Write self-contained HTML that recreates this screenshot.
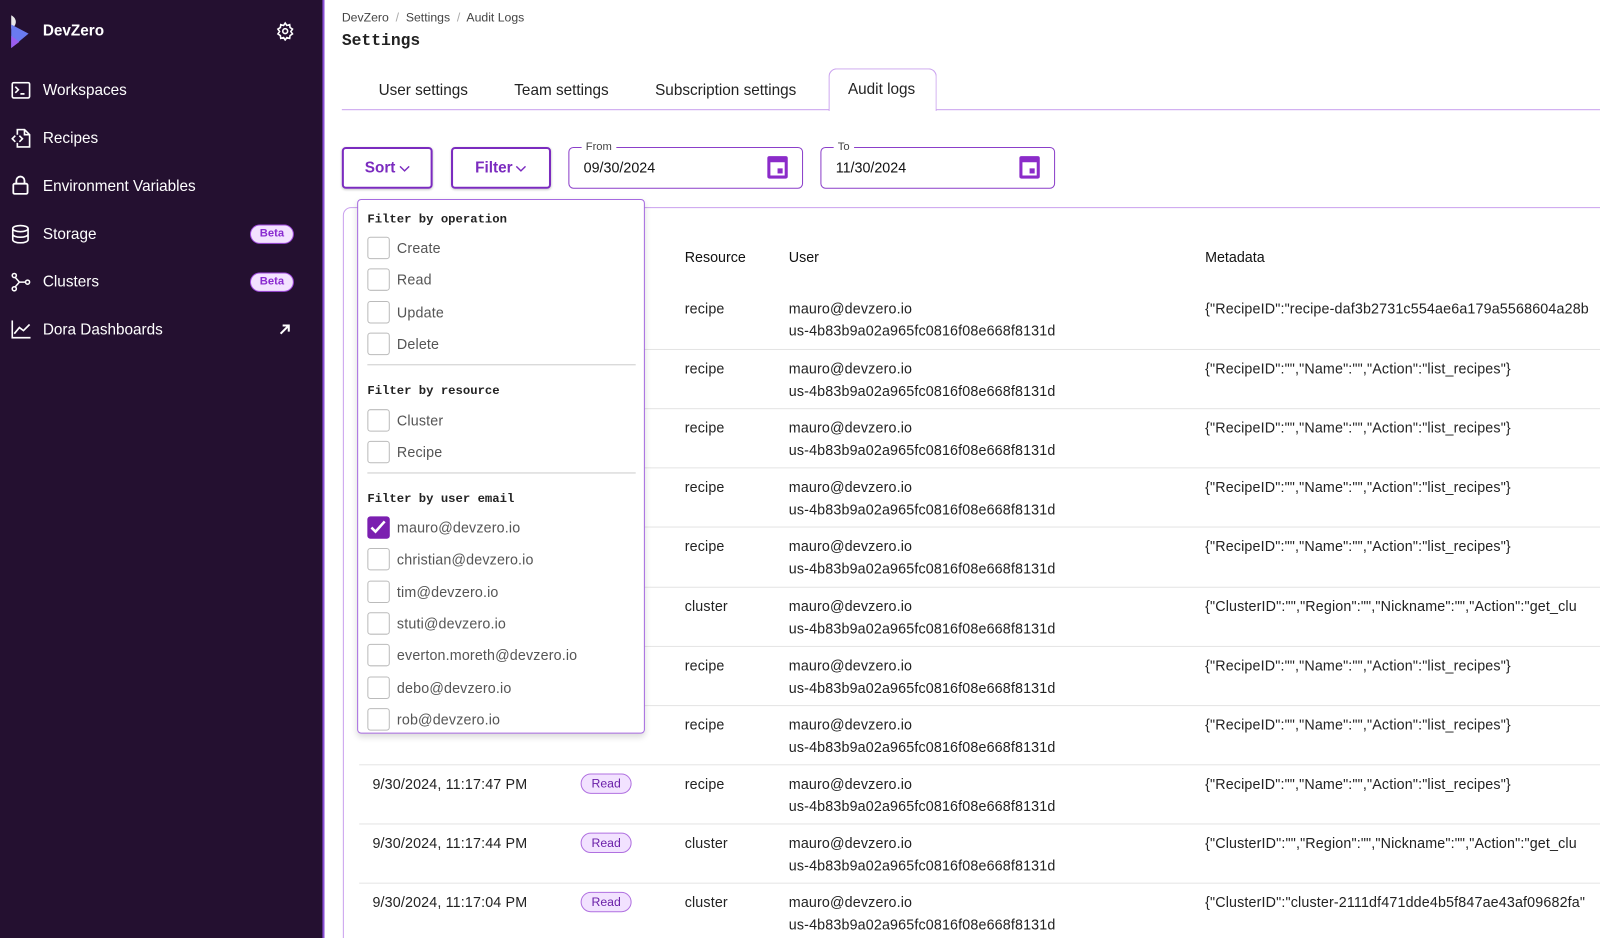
<!DOCTYPE html>
<html><head><meta charset="utf-8"><style>
*{box-sizing:border-box;margin:0;padding:0}
html,body{width:1600px;height:938px;overflow:hidden;background:#fff}
body{font-family:"Liberation Sans",sans-serif;color:#111;position:relative}
#w{position:absolute;left:0;top:0;width:1568px;height:920px;transform:scale(1.0204);transform-origin:0 0}
.sb{position:absolute;left:0;top:0;width:318px;height:920px;background:#241030;border-right:2px solid #8a4fd6}
.sb .it{position:absolute;left:42px;color:#fff;font-size:15px}
.sb svg{position:absolute}
.beta{position:absolute;left:245px;width:43px;height:19px;border-radius:10px;background:#f3e2ff;border:1px solid #a24be0;color:#8a2bd0;font-size:11px;font-weight:bold;text-align:center;line-height:17px}
.abs{position:absolute}
.tab{position:absolute;top:80px;font-size:15px;color:#222}
.btn{position:absolute;top:144px;height:41px;border:2px solid #7b2bbf;border-radius:4px;color:#7b2bbf;font-weight:bold;font-size:15px;line-height:37px;text-align:center;box-shadow:0 1px 2px rgba(0,0,0,.2)}
.btn svg{vertical-align:middle;margin-left:3px}
.date{position:absolute;top:144px;height:41px;border:1.5px solid #8b3fc9;border-radius:5px;font-size:14px;line-height:38px;padding-left:14px}
.date .lb{position:absolute;top:-8px;left:12px;background:#fff;padding:0 4px;font-size:11px;color:#444;line-height:14px}
.cal{position:absolute;right:14px;top:8px;width:20px;height:22px;border:3px solid #8b2bc9;border-top-width:6px;border-radius:2px}
.cal:after{content:"";position:absolute;right:2px;bottom:2px;width:5px;height:5px;background:#8b2bc9}
.row{position:absolute;left:352px;width:1248px;height:58px;border-top:1px solid #e4e4e4;font-size:14px;color:#222;letter-spacing:.15px}
.row span{position:absolute;white-space:nowrap}
.rd{position:absolute;left:217px;top:8px;width:50px;height:20px;border:1px solid #b070e0;background:#f2e2ff;border-radius:10px;font-size:12px;color:#6a1fa8;text-align:center;line-height:18px;letter-spacing:0}
.dd{position:absolute;left:350px;top:195px;width:282px;height:524px;background:#fff;border:1.5px solid #a66ae0;border-radius:4px;box-shadow:0 3px 6px rgba(0,0,0,.15)}
.dd h4{position:absolute;left:9px;font-family:"Liberation Mono",monospace;font-size:12px;font-weight:bold;color:#222}
.ck{position:absolute;left:9px;width:22px;height:22px;border:1.5px solid #bbb;border-radius:3px}
.cl{position:absolute;left:38px;font-size:14px;color:#555;letter-spacing:.15px}
.hr{position:absolute;left:9px;width:263px;border-top:1px solid #ccc}
</style></head><body><div id="w">
<div class="sb">
<svg style="left:8px;top:15px" width="22" height="32" viewBox="0 0 22 32"><path d="M3 0 C9 3 9 10 3 13 Z" fill="#e8e8e8"/><path d="M3 9 L20 18 L3 32 Z" fill="#6a7bf0"/><path d="M3 20 L11 26 L3 32Z" fill="#9b5ef0"/></svg>
<div class="it" style="top:22px;font-weight:bold">DevZero</div>
<svg style="left:270px;top:21px" width="19" height="19" viewBox="0 0 24 24" fill="none" stroke="#fff" stroke-width="2"><circle cx="12" cy="12" r="3"/><path d="M12 2l2 3 3.5-1 .5 3.5 3 2-2 3 2 3-3 2-.5 3.5-3.5-1-2 3-2-3-3.5 1-.5-3.5-3-2 2-3-2-3 3-2 .5-3.5 3.5 1z"/></svg>
<svg style="left:11px;top:80px" width="19" height="17" viewBox="0 0 19 17" fill="none" stroke="#fff" stroke-width="1.6"><rect x="1" y="1" width="17" height="15" rx="1.5"/><path d="M4 5l3 3-3 3M9 12h4"/></svg>
<div class="it" style="top:80px">Workspaces</div>
<svg style="left:11px;top:126px" width="19" height="19" viewBox="0 0 19 19" fill="none" stroke="#fff" stroke-width="1.6"><path d="M6 6V1h7l5 5v12H6v-4M13 1v5h5"/><path d="M4 7L1 10l3 3M8 7l3 3-3 3"/></svg>
<div class="it" style="top:127px">Recipes</div>
<svg style="left:12px;top:172px" width="16" height="19" viewBox="0 0 16 19" fill="none" stroke="#fff" stroke-width="1.8"><rect x="1" y="8" width="14" height="10" rx="1.5"/><path d="M4 8V5a4 4 0 0 1 8 0v3"/></svg>
<div class="it" style="top:174px">Environment Variables</div>
<svg style="left:11px;top:220px" width="18" height="19" viewBox="0 0 18 19" fill="none" stroke="#fff" stroke-width="1.6"><ellipse cx="9" cy="4" rx="7.5" ry="3"/><path d="M1.5 4v11c0 1.7 3.4 3 7.5 3s7.5-1.3 7.5-3V4M1.5 9.5c0 1.7 3.4 3 7.5 3s7.5-1.3 7.5-3"/></svg>
<div class="it" style="top:221px">Storage</div><div class="beta" style="top:220px">Beta</div>
<svg style="left:11px;top:267px" width="19" height="19" viewBox="0 0 19 19" fill="none" stroke="#fff" stroke-width="1.5"><circle cx="3" cy="3" r="2"/><circle cx="3" cy="16" r="2"/><circle cx="16" cy="9.5" r="2"/><path d="M4 5l4 4.5h6M8 9.5L4 14"/></svg>
<div class="it" style="top:268px">Clusters</div><div class="beta" style="top:267px">Beta</div>
<svg style="left:11px;top:314px" width="19" height="18" viewBox="0 0 19 18" fill="none" stroke="#fff" stroke-width="1.6"><path d="M1 0v17h18M3 13l5-6 4 3 6-6"/></svg>
<div class="it" style="top:315px">Dora Dashboards</div>
<svg style="left:273px;top:317px" width="12" height="12" viewBox="0 0 12 12" fill="none" stroke="#fff" stroke-width="2"><path d="M2 10L10 2M4 2h6v6"/></svg>
</div>

<div class="abs" style="left:335px;top:10px;font-size:12px;color:#444">DevZero <span style="color:#aaa">&nbsp;/&nbsp;</span> Settings <span style="color:#aaa">&nbsp;/&nbsp;</span> Audit Logs</div>
<div class="abs" style="left:335px;top:31px;font-family:'Liberation Mono',monospace;font-size:16px;font-weight:bold;color:#222">Settings</div>
<div class="abs" style="left:335px;top:107px;width:1265px;border-top:1.5px solid #c9a0ee"></div>
<div class="abs" style="left:812px;top:67px;width:106px;height:42px;border:1.5px solid #c9a0ee;border-bottom:none;border-radius:8px 8px 0 0;background:#fff"></div>
<div class="tab" style="left:371px">User settings</div>
<div class="tab" style="left:504px">Team settings</div>
<div class="tab" style="left:642px">Subscription settings</div>
<div class="tab" style="left:831px;top:79px">Audit logs</div>

<div class="btn" style="left:335px;width:89px">Sort<svg width="11" height="7" viewBox="0 0 11 7" fill="none" stroke="#7b2bbf" stroke-width="1.4"><path d="M1 1l4.5 4.5L10 1"/></svg></div>
<div class="btn" style="left:442px;width:98px">Filter<svg width="11" height="7" viewBox="0 0 11 7" fill="none" stroke="#7b2bbf" stroke-width="1.4"><path d="M1 1l4.5 4.5L10 1"/></svg></div>
<div class="date" style="left:557px;width:230px"><span class="lb">From</span>09/30/2024<div class="cal"></div></div>
<div class="date" style="left:804px;width:230px"><span class="lb">To</span>11/30/2024<div class="cal"></div></div>

<div class="abs" style="left:336px;top:203px;width:1280px;height:760px;border:1.5px solid #c9a0ee;border-radius:8px"></div>
<div class="abs" style="left:671px;top:244px;font-size:14px">Resource</div>
<div class="abs" style="left:773px;top:244px;font-size:14px">User</div>
<div class="abs" style="left:1181px;top:244px;font-size:14px">Metadata</div>

<div class="row" style="top:284px;border-top:none"><span style="left:319px;top:10px">recipe</span><span style="left:421px;top:10px">mauro@devzero.io</span><span style="left:421px;top:32px">us-4b83b9a02a965fc0816f08e668f8131d</span><span style="left:829px;top:10px">{"RecipeID":"recipe-daf3b2731c554ae6a179a5568604a28b</span></div>
<div class="row" style="top:342px"><span style="left:319px;top:10px">recipe</span><span style="left:421px;top:10px">mauro@devzero.io</span><span style="left:421px;top:32px">us-4b83b9a02a965fc0816f08e668f8131d</span><span style="left:829px;top:10px">{"RecipeID":"","Name":"","Action":"list_recipes"}</span></div>
<div class="row" style="top:400px"><span style="left:319px;top:10px">recipe</span><span style="left:421px;top:10px">mauro@devzero.io</span><span style="left:421px;top:32px">us-4b83b9a02a965fc0816f08e668f8131d</span><span style="left:829px;top:10px">{"RecipeID":"","Name":"","Action":"list_recipes"}</span></div>
<div class="row" style="top:458px"><span style="left:319px;top:10px">recipe</span><span style="left:421px;top:10px">mauro@devzero.io</span><span style="left:421px;top:32px">us-4b83b9a02a965fc0816f08e668f8131d</span><span style="left:829px;top:10px">{"RecipeID":"","Name":"","Action":"list_recipes"}</span></div>
<div class="row" style="top:516px"><span style="left:319px;top:10px">recipe</span><span style="left:421px;top:10px">mauro@devzero.io</span><span style="left:421px;top:32px">us-4b83b9a02a965fc0816f08e668f8131d</span><span style="left:829px;top:10px">{"RecipeID":"","Name":"","Action":"list_recipes"}</span></div>
<div class="row" style="top:575px"><span style="left:319px;top:10px">cluster</span><span style="left:421px;top:10px">mauro@devzero.io</span><span style="left:421px;top:32px">us-4b83b9a02a965fc0816f08e668f8131d</span><span style="left:829px;top:10px">{"ClusterID":"","Region":"","Nickname":"","Action":"get_clu</span></div>
<div class="row" style="top:633px"><span style="left:319px;top:10px">recipe</span><span style="left:421px;top:10px">mauro@devzero.io</span><span style="left:421px;top:32px">us-4b83b9a02a965fc0816f08e668f8131d</span><span style="left:829px;top:10px">{"RecipeID":"","Name":"","Action":"list_recipes"}</span></div>
<div class="row" style="top:691px"><span style="left:319px;top:10px">recipe</span><span style="left:421px;top:10px">mauro@devzero.io</span><span style="left:421px;top:32px">us-4b83b9a02a965fc0816f08e668f8131d</span><span style="left:829px;top:10px">{"RecipeID":"","Name":"","Action":"list_recipes"}</span></div>
<div class="row" style="top:749px"><span style="left:13px;top:10px">9/30/2024, 11:17:47 PM</span><div class="rd">Read</div><span style="left:319px;top:10px">recipe</span><span style="left:421px;top:10px">mauro@devzero.io</span><span style="left:421px;top:32px">us-4b83b9a02a965fc0816f08e668f8131d</span><span style="left:829px;top:10px">{"RecipeID":"","Name":"","Action":"list_recipes"}</span></div>
<div class="row" style="top:807px"><span style="left:13px;top:10px">9/30/2024, 11:17:44 PM</span><div class="rd">Read</div><span style="left:319px;top:10px">cluster</span><span style="left:421px;top:10px">mauro@devzero.io</span><span style="left:421px;top:32px">us-4b83b9a02a965fc0816f08e668f8131d</span><span style="left:829px;top:10px">{"ClusterID":"","Region":"","Nickname":"","Action":"get_clu</span></div>
<div class="row" style="top:865px"><span style="left:13px;top:10px">9/30/2024, 11:17:04 PM</span><div class="rd">Read</div><span style="left:319px;top:10px">cluster</span><span style="left:421px;top:10px">mauro@devzero.io</span><span style="left:421px;top:32px">us-4b83b9a02a965fc0816f08e668f8131d</span><span style="left:829px;top:10px">{"ClusterID":"cluster-2111df471dde4b5f847ae43af09682fa"</span></div>

<div class="dd">
<h4 style="top:12px">Filter by operation</h4>
<div class="ck" style="top:36px"></div><div class="cl" style="top:39px">Create</div>
<div class="ck" style="top:67px"></div><div class="cl" style="top:70px">Read</div>
<div class="ck" style="top:99px"></div><div class="cl" style="top:102px">Update</div>
<div class="ck" style="top:130px"></div><div class="cl" style="top:133px">Delete</div>
<div class="hr" style="top:161px"></div>
<h4 style="top:180px">Filter by resource</h4>
<div class="ck" style="top:205px"></div><div class="cl" style="top:208px">Cluster</div>
<div class="ck" style="top:236px"></div><div class="cl" style="top:239px">Recipe</div>
<div class="hr" style="top:267px"></div>
<h4 style="top:286px">Filter by user email</h4>
<div class="ck" style="top:310px;background:#7b1fb0;border-color:#7b1fb0"><svg width="19" height="19" viewBox="0 0 19 19" fill="none" stroke="#fff" stroke-width="2.5"><path d="M3 10l4 4 9-10"/></svg></div><div class="cl" style="top:313px">mauro@devzero.io</div>
<div class="ck" style="top:341px"></div><div class="cl" style="top:344px">christian@devzero.io</div>
<div class="ck" style="top:373px"></div><div class="cl" style="top:376px">tim@devzero.io</div>
<div class="ck" style="top:404px"></div><div class="cl" style="top:407px">stuti@devzero.io</div>
<div class="ck" style="top:435px"></div><div class="cl" style="top:438px">everton.moreth@devzero.io</div>
<div class="ck" style="top:467px"></div><div class="cl" style="top:470px">debo@devzero.io</div>
<div class="ck" style="top:498px"></div><div class="cl" style="top:501px">rob@devzero.io</div>
</div>
</div></body></html>
